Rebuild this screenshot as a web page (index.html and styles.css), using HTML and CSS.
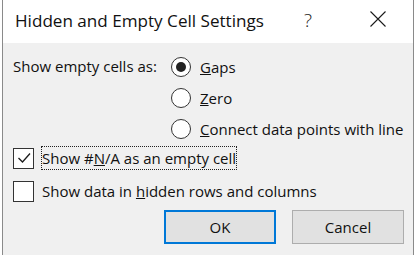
FILE: index.html
```html
<!DOCTYPE html>
<html lang="en">
<head>
  <meta charset="UTF-8" />
  <title>Hidden and Empty Cell Settings</title>
  <link rel="stylesheet" href="styles.css">
</head>
<body>

  <div class="dialog">
    <div class="titlebar">
      <span class="title">Hidden and Empty Cell Settings</span>
      <span class="help">?</span>
      <span class="close">
        <svg width="16" height="16" viewBox="0 0 16 16">
          <path d="M0.5 0.5 L15.5 15.5 M15.5 0.5 L0.5 15.5" stroke="#1a1a1a" stroke-width="1.1" fill="none"/>
        </svg>
      </span>
    </div>

    <div class="content">
      <div class="empty-group">
        <div class="group-label">Show empty cells as:</div>
        <div class="options">
          <label class="radio-row">
            <span class="radio checked"></span>
            <span><u>G</u>aps</span>
          </label>
          <label class="radio-row">
            <span class="radio"></span>
            <span><u>Z</u>ero</span>
          </label>
          <label class="radio-row">
            <span class="radio"></span>
            <span><u>C</u>onnect data points with line</span>
          </label>
        </div>
      </div>

      <label class="check-row">
        <span class="check">
          <svg width="18" height="18" viewBox="0 0 18 18">
            <path d="M3.5 9 L7.5 13 L15 4.5" stroke="#1a1a1a" stroke-width="1.3" fill="none"/>
          </svg>
        </span>
        <span class="check-label focused">Show #<u>N</u>/A as an empty cell</span>
      </label>
      <label class="check-row">
        <span class="check"></span>
        <span class="check-label">Show data in <u>h</u>idden rows and columns</span>
      </label>

      <div class="buttons">
        <button class="btn default">OK</button>
        <button class="btn">Cancel</button>
      </div>
    </div>
  </div>

</body>
</html>
```

FILE: styles.css
```css
html, body {
  margin: 0;
  height: 100%;
}

body {
  background: #fff;
  font-family: "Open Sans", "Noto Sans", sans-serif;
  color: #111;
  overflow: hidden;
}

.dialog {
  margin-left: 2px;
  width: 410px;
  height: 255px;
  border-left: 1px solid #8a8a8a;
  border-right: 1px solid #8a8a8a;
  background: #f0f0f0;
}

.titlebar {
  height: 43px;
  background: #fff;
  display: flex;
  align-items: center;
}

.title {
  font-size: 17.1px;
  margin-left: 12px;
  margin-top: -2px;
}

.help {
  font-size: 19px;
  font-weight: 300;
  margin-left: 40px;
  margin-top: -4px;
  color: #222;
}

.close {
  margin-left: 58px;
  margin-top: -6px;
  display: flex;
}

.content {
  padding: 8px 9px 0 10px;
  font-size: 15px;
}

.empty-group {
  display: flex;
}

.group-label {
  width: 158px;
  height: 31px;
  line-height: 31px;
}

.radio-row {
  display: flex;
  align-items: center;
  height: 31px;
  gap: 9px;
}

.radio {
  width: 18px;
  height: 18px;
  border: 1px solid #333;
  border-radius: 50%;
  background: #fff;
  position: relative;
}

.radio.checked::after {
  content: "";
  position: absolute;
  left: 4px;
  top: 4px;
  width: 10px;
  height: 10px;
  border-radius: 50%;
  background: #222;
}

.check-row {
  display: flex;
  align-items: center;
  height: 28px;
  gap: 7px;
}

.check-row + .check-row {
  margin-top: 5px;
}

.check {
  width: 19px;
  height: 19px;
  border: 1px solid #333;
  background: #fff;
  display: flex;
  align-items: center;
  justify-content: center;
}

.check-label {
  padding: 1px 0;
  border: 1px dotted transparent;
}

.check-label.focused {
  border-color: #222;
}

.buttons {
  display: flex;
  justify-content: flex-end;
  gap: 16px;
  margin-top: 5px;
}

.btn {
  width: 112px;
  height: 34px;
  background: #e1e1e1;
  border: 1px solid #adadad;
  font-family: inherit;
  font-size: 15px;
  color: #111;
  padding: 0;
}

.btn.default {
  border: 2px solid #0078d7;
}
```
